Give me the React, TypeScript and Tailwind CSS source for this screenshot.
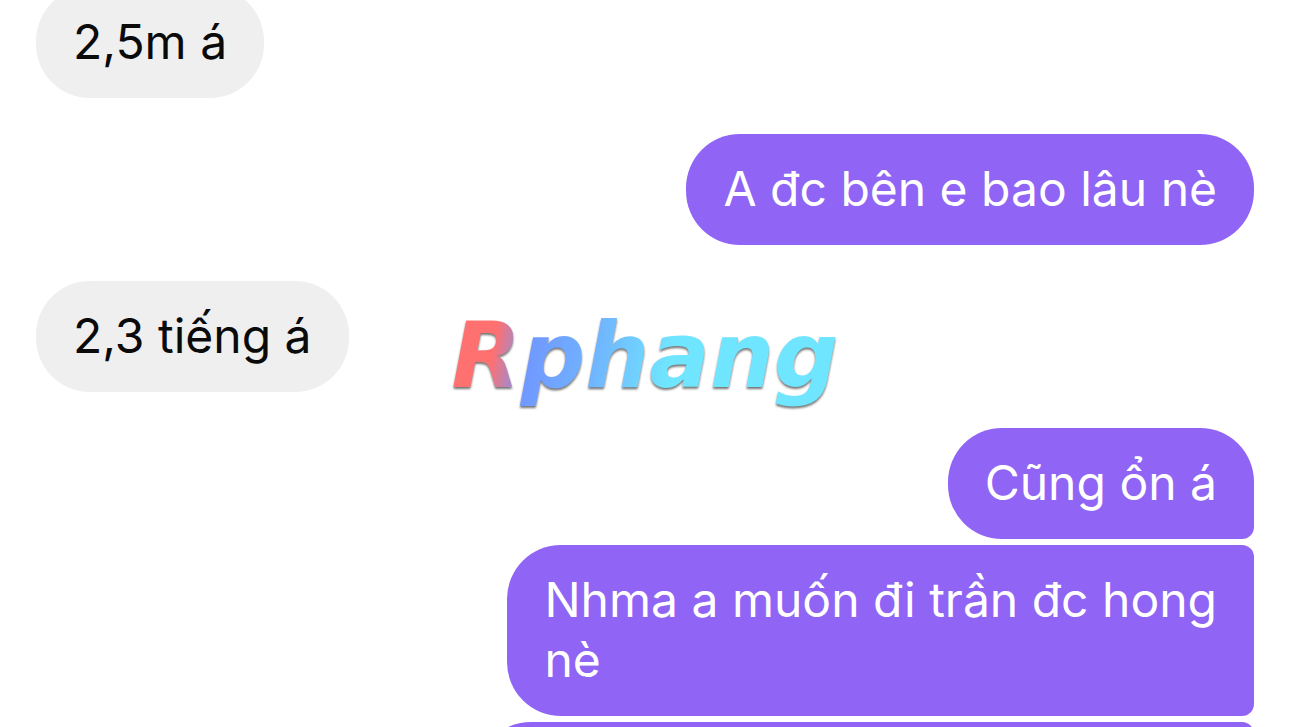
import clsx from "clsx";

type Message = {
  lines: string[];
  shape?: string;
};

type Group = {
  from: "me" | "them";
  messages: Message[];
};

const groups: Group[] = [
  { from: "them", messages: [{ lines: ["2,5m á"] }] },
  { from: "me", messages: [{ lines: ["A đc bên e bao lâu nè"] }] },
  { from: "them", messages: [{ lines: ["2,3 tiếng á"] }] },
  {
    from: "me",
    messages: [
      { lines: ["Cũng ổn á"], shape: "rounded-br-xl" },
      { lines: ["Nhma a muốn đi trần đc hong", "nè"], shape: "rounded-r-xl" },
      { lines: [], shape: "rounded-r-xl w-[777px] h-[111px]" },
    ],
  },
];

const Bubble = ({ message, mine }: { message: Message; mine: boolean }) => (
  <div
    className={clsx(
      "max-w-full shrink-0 rounded-[54px] px-[37px] pt-[25px] pb-[26px] text-[48px] leading-[60px]",
      mine ? "bg-[#9064f5] text-white" : "bg-[#efefef] text-[#0a0a0a]",
      message.shape
    )}
  >
    {message.lines.map((line) => (
      <p key={line}>{line}</p>
    ))}
  </div>
);

const Watermark = () => (
  <div className="pointer-events-none absolute inset-0 flex items-center justify-center pb-4">
    <span className="bg-[linear-gradient(100deg,#ff7070_14%,#7099ff_23%,#70b4ff_38%,#70e5ff_56%)] bg-clip-text px-2 font-['DejaVu_Sans',sans-serif] text-[90px] leading-[120px] font-bold text-transparent italic drop-shadow-[0_2px_1px_rgba(0,0,0,0.55)]">
      Rphang
    </span>
  </div>
);

const App = () => {
  return (
    <main className="relative h-screen overflow-hidden bg-white font-['Inter',sans-serif]">
      <div className="-mt-[13px] flex flex-col gap-9 px-9">
        {groups.map((group, index) => (
          <section
            key={index}
            className={clsx(
              "flex flex-col gap-1.5",
              group.from === "me" ? "items-end" : "items-start"
            )}
          >
            {group.messages.map((message, i) => (
              <Bubble key={i} message={message} mine={group.from === "me"} />
            ))}
          </section>
        ))}
      </div>
      <Watermark />
    </main>
  );
};

export default App;
